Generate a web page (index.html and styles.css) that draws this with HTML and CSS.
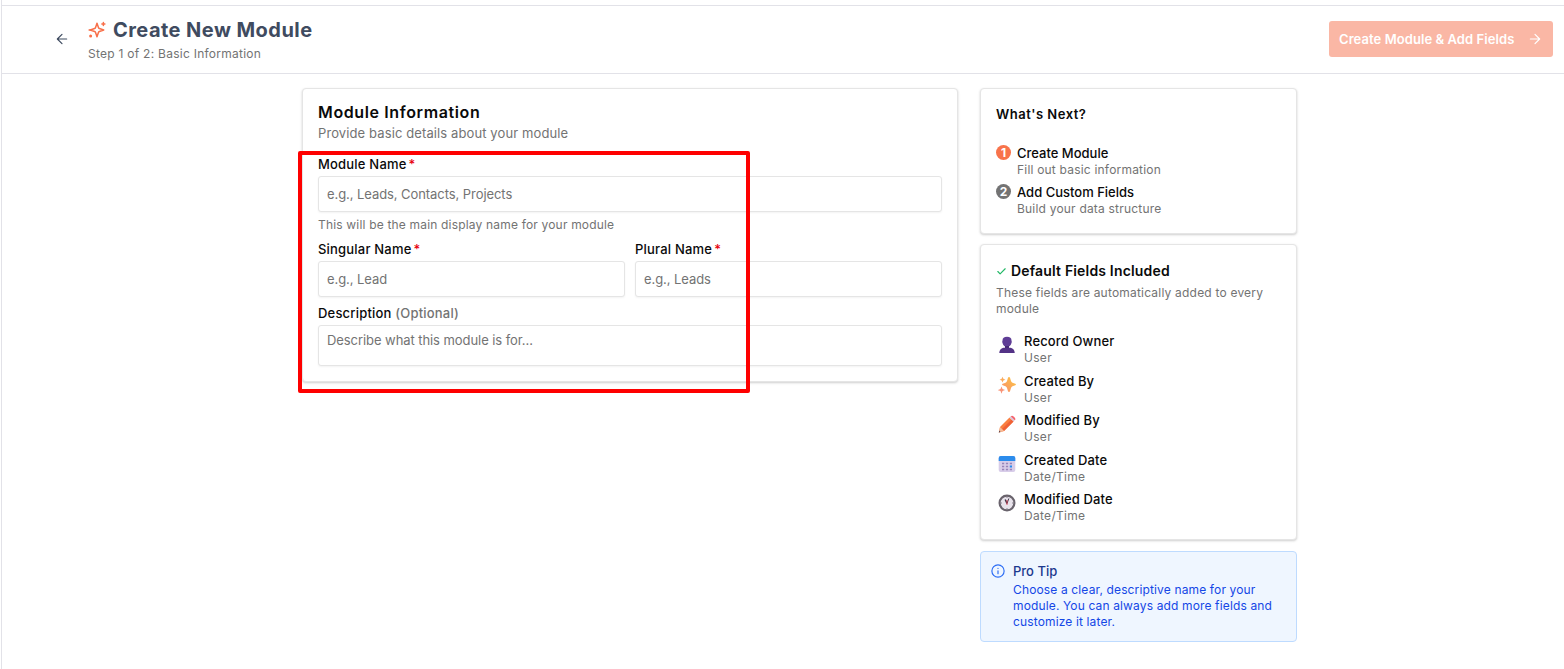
FILE: index.html
```
<!DOCTYPE html>
<html lang="en">
<head>
  <meta charset="utf-8">
  <title>Create New Module</title>
  <link rel="stylesheet" href="styles.css">
</head>
<body>
  <div class="page">
    <header class="header">
      <button class="back" aria-label="Back">
        <svg width="14" height="14" viewBox="0 0 24 24" fill="none" stroke="currentColor" stroke-width="2" stroke-linecap="round" stroke-linejoin="round"><path d="M20 12H4M12 4l-8 8 8 8"/></svg>
      </button>
      <div class="heading">
        <h1>
          <svg width="18" height="18" viewBox="0 0 24 24" fill="none" stroke="#f8704a" stroke-width="2" stroke-linecap="round" stroke-linejoin="round"><path d="M12 3l-1.900 5.800a2 2 0 0 1-1.300 1.300L3 12l5.800 1.900a2 2 0 0 1 1.300 1.300L12 21l1.900-5.800a2 2 0 0 1 1.300-1.300L21 12l-5.800-1.900a2 2 0 0 1-1.300-1.300z"/><path d="M20.500 2v4M22.500 4h-4"/><path d="M1.500 12h2"/><circle cx="3.500" cy="20" r="1"/></svg>
          <span>Create New Module</span>
        </h1>
        <p>Step 1 of 2: Basic Information</p>
      </div>
      <button class="submit" disabled>
        <span>Create Module &amp; Add Fields</span>
        <svg width="14" height="14" viewBox="0 0 24 24" fill="none" stroke="currentColor" stroke-width="2" stroke-linecap="round" stroke-linejoin="round"><path d="M4 12h16M12 4l8 8-8 8"/></svg>
      </button>
    </header>

    <main class="content">
      <form class="card form-card">
        <h2>Module Information</h2>
        <p class="subtitle">Provide basic details about your module</p>
        <label for="name">Module Name<i>*</i></label>
        <input id="name" type="text" placeholder="e.g., Leads, Contacts, Projects">
        <p class="help">This will be the main display name for your module</p>
        <div class="row">
          <div class="col">
            <label for="singular">Singular Name<i>*</i></label>
            <input id="singular" type="text" placeholder="e.g., Lead">
          </div>
          <div class="col">
            <label for="plural">Plural Name<i>*</i></label>
            <input id="plural" type="text" placeholder="e.g., Leads">
          </div>
        </div>
        <label for="description">Description <span class="optional">(Optional)</span></label>
        <textarea id="description" placeholder="Describe what this module is for..."></textarea>
      </form>

      <aside class="sidebar">
        <section class="card next-card">
          <h3>What's Next?</h3>
          <div class="step">
            <span class="badge active">1</span>
            <div>
              <h4>Create Module</h4>
              <p>Fill out basic information</p>
            </div>
          </div>
          <div class="step">
            <span class="badge">2</span>
            <div>
              <h4>Add Custom Fields</h4>
              <p>Build your data structure</p>
            </div>
          </div>
        </section>

        <section class="card fields-card">
          <h3>
            <svg width="11" height="11" viewBox="0 0 24 24" fill="none" stroke="#22b866" stroke-width="2.500" stroke-linecap="round" stroke-linejoin="round"><path d="M20 6L9 17l-5-5"/></svg>
            <span>Default Fields Included</span>
          </h3>
          <p class="fields-desc">These fields are automatically added to every module</p>
          <div class="field">
            <svg width="18" height="18" viewBox="0 0 18 18"><path d="M4.500 4.500C4.500 2 6 .8 9 .8s4.500 1.200 4.500 3.700l.3 1.500-.5 1.400C12.700 9.500 11 11 9 11S5.300 9.500 4.700 7.400L4.200 6z" fill="#5f3d96"/><path d="M7 10h4v3H7z" fill="#462a75"/><path d="M1.300 17c0-3.500 2.500-5.200 5.500-5.200h4.400c3 0 5.500 1.700 5.500 5.200z" fill="#533286"/></svg>
            <div>
              <h4>Record Owner</h4>
              <p>User</p>
            </div>
          </div>
          <div class="field">
            <svg width="18" height="18" viewBox="0 0 18 18">
              <defs><linearGradient id="gold" x1="1" y1="0" x2="0" y2="1"><stop offset="0" stop-color="#fcc73f"/><stop offset="1" stop-color="#f98d70"/></linearGradient></defs>
              <path d="M11 1q.8 0 1 .8l1 3.200q.3 1.200 1.500 1.700l2.800 1.100q1.300.7 0 1.400l-2.800 1.100q-1.200.5-1.500 1.700l-1 3.200q-.2.800-1 .8t-1-.8l-1-3.200Q8.700 10.800 7.500 10.300L4.700 9.200q-1.300-.7 0-1.400l2.800-1.100Q8.700 6.200 9 5l1-3.200q.2-.8 1-.8z" fill="url(#gold)"/>
              <path d="M4.500.8l.9 2 2 .9-2 .9-.9 2-.9-2-2-.9 2-.9z" fill="#fbac5e"/>
              <path d="M3.500 10.500l1 2.600 2.600 1-2.600 1-1 2.600-1-2.600-2.600-1 2.600-1z" fill="#f99477"/>
            </svg>
            <div>
              <h4>Created By</h4>
              <p>User</p>
            </div>
          </div>
          <div class="field">
            <svg width="18" height="18" viewBox="0 0 18 18"><path d="M2 12L11.500 2.500l4 4L6 16l-5.200 1.500z" fill="#fa7f40"/><path d="M4 14L13.500 4.500l2 2L6 16z" fill="#ef6136"/><path d="M11.500 2.500l1.200-1.200 4 4-1.200 1.200z" fill="#d7c7dc"/><path d="M12.700 1.300c1-1 2-.8 2.900.1l1 1c.9.900 1.100 1.900.1 2.900z" fill="#f5626b"/><path d="M2 12l4 4-5.200 1.500z" fill="#f6bb98"/><path d="M1.300 15.500l1.300 1.400-1.800.6z" fill="#51404e"/></svg>
            <div>
              <h4>Modified By</h4>
              <p>User</p>
            </div>
          </div>
          <div class="field">
            <svg width="18" height="18" viewBox="0 0 18 18"><rect x=".7" y="1" width="16.600" height="16" rx="2" fill="#d8cde9"/><path d="M.7 6V3a2 2 0 0 1 2-2h12.600a2 2 0 0 1 2 2v3z" fill="#2b8cec"/><path d="M4 8.500h2.200M7.900 8.500h2.200M4 11.500h2.200M7.900 11.500h2.200M4 14.500h2.200M7.900 14.500h2.200M11.800 8.500h2.200M11.800 14.500h2.200" stroke="#9784b9" stroke-width="1.700"/><path d="M11.800 11.500h2.200" stroke="#258af0" stroke-width="2"/></svg>
            <div>
              <h4>Created Date</h4>
              <p>Date/Time</p>
            </div>
          </div>
          <div class="field">
            <svg width="18" height="18" viewBox="0 0 18 18"><circle cx="9" cy="9" r="7.400" fill="#e8e3eb" stroke="#69636c" stroke-width="2.200"/><path d="M9 3v1M9 14v1M3 9h1M14 9h1" stroke="#8a828f"/><path d="M9 9.500L7.200 5.500" stroke="#40384a" stroke-width="1.500"/><path d="M9 9.500l1.800-5" stroke="#40384a"/><path d="M9 11V6" stroke="#e8364d" stroke-width=".8"/></svg>
            <div>
              <h4>Modified Date</h4>
              <p>Date/Time</p>
            </div>
          </div>
        </section>

        <section class="tip">
          <svg width="14" height="14" viewBox="0 0 24 24" fill="none" stroke="#2b6cf5" stroke-width="2" stroke-linecap="round"><circle cx="12" cy="12" r="10.500"/><path d="M12 16.500V11.500M12 7.500v.1"/></svg>
          <div>
            <h4>Pro Tip</h4>
            <p>Choose a clear, descriptive name for your<br>module. You can always add more fields and<br>customize it later.</p>
          </div>
        </section>
      </aside>
    </main>
  </div>
  <div class="highlight"></div>
</body>
</html>
```
FILE: styles.css
```
* {
  box-sizing: border-box;
}

body {
  margin: 0;
  height: 669px;
  overflow: hidden;
  background: #fff;
  color: #0a0a0a;
  font-family: Inter, "Open Sans", sans-serif;
  font-size: 13px;
}

h1, h2, h3, h4, p {
  margin: 0;
}

svg {
  flex: none;
  display: block;
}

.page {
  margin-left: 1px;
  padding-top: 5px;
  height: 669px;
  border-left: 1px solid #e2e2e8;
}

.header {
  display: flex;
  align-items: center;
  height: 69px;
  padding: 0 11px 1px 53px;
  border-top: 1px solid #e2e2e8;
  border-bottom: 1px solid #e2e2e8;
}

.back {
  padding: 0;
  border: none;
  background: none;
  color: #3d4a5f;
}

.heading {
  flex: 1;
  margin-left: 19px;
}

.heading h1 {
  display: flex;
  align-items: center;
  gap: 7px;
  font-size: 20px;
  line-height: 26px;
  font-weight: 700;
  color: #3f4b60;
  letter-spacing: 0.45px;
}

.heading p {
  margin-top: 3px;
  font-size: 12px;
  line-height: 16px;
  color: #737373;
  letter-spacing: 0.26px;
}

.submit {
  display: flex;
  align-items: center;
  justify-content: space-between;
  width: 224px;
  height: 36px;
  padding: 0 11px 0 10px;
  border: none;
  border-radius: 3px;
  background: #fab7a5;
  color: #fff;
  font-family: inherit;
  font-size: 13px;
  font-weight: 600;
  letter-spacing: 0.07px;
}

.content {
  display: flex;
  align-items: flex-start;
  gap: 22px;
  padding: 14px 0 0 300px;
}

.card {
  border: 1px solid #e5e5e5;
  border-radius: 4px;
  background: #fff;
  box-shadow: 0 1px 3px rgba(0, 0, 0, 0.1), 0 1px 2px rgba(0, 0, 0, 0.1);
}

.form-card {
  display: flex;
  flex-direction: column;
  width: 656px;
  height: 294px;
  padding: 13px 15px 0;
}

.form-card h2 {
  font-size: 16px;
  line-height: 20px;
  font-weight: 600;
  letter-spacing: 0.62px;
}

.subtitle {
  margin: 2px 0 13px;
  line-height: 18px;
  color: #737373;
  letter-spacing: 0.11px;
}

label {
  height: 21px;
  line-height: 18px;
  font-weight: 500;
  letter-spacing: 0.2px;
}

label i {
  margin-left: 2px;
  font-style: normal;
  color: #e7000b;
}

.optional {
  color: #737373;
}

input,
textarea {
  width: 100%;
  height: 36px;
  padding: 0 8px;
  border: 1px solid #e5e5e5;
  border-radius: 3px;
  background: #fff;
  box-shadow: 0 1px 2px rgba(0, 0, 0, 0.05);
  font-family: inherit;
  font-size: 13px;
  letter-spacing: -0.07px;
}

textarea {
  height: 41px;
  padding: 5px 8px;
  line-height: 18px;
  resize: none;
  overflow: hidden;
}

input::placeholder,
textarea::placeholder {
  color: #737373;
}

.help {
  margin: 5px 0 7px;
  font-size: 12px;
  line-height: 16px;
  color: #737373;
  letter-spacing: 0.18px;
}

.row {
  display: flex;
  gap: 10px;
  margin-bottom: 7px;
}

.col {
  display: flex;
  flex: 1;
  flex-direction: column;
}

.sidebar {
  display: flex;
  flex-direction: column;
  width: 317px;
}

.sidebar h3 {
  font-size: 14px;
  line-height: 18px;
  font-weight: 600;
  letter-spacing: 0.17px;
}

.sidebar h4 {
  font-size: 13px;
  line-height: 17px;
  font-weight: 500;
}

.sidebar p {
  font-size: 12px;
  line-height: 16px;
  color: #737373;
  letter-spacing: 0.2px;
}

.sidebar .next-card h3 {
  margin-bottom: 22px;
  font-size: 13px;
  letter-spacing: 0.5px;
}

.next-card {
  height: 146px;
  padding: 16px 15px 0;
}

.step {
  display: flex;
  gap: 6px;
  height: 39px;
}

.badge {
  width: 15px;
  height: 15px;
  border-radius: 50%;
  background: #737373;
  color: #fff;
  font-size: 12px;
  line-height: 15px;
  font-weight: 700;
  text-align: center;
}

.badge.active {
  background: #f8734b;
}

.fields-card {
  height: 296px;
  margin-top: 10px;
  padding: 17px 15px 0;
}

.fields-card h3 {
  display: flex;
  align-items: center;
  gap: 4px;
}

.fields-card .fields-desc {
  margin: 5px 0 16px;
}

.field {
  display: flex;
  gap: 8px;
  height: 39.5px;
  padding-left: 2px;
}

.field svg {
  margin-top: 3px;
}

.field h4 {
  letter-spacing: 0.13px;
}

.sidebar .field p {
  letter-spacing: 0.3px;
}

.tip {
  display: flex;
  gap: 8px;
  height: 91px;
  margin-top: 11px;
  padding: 11px 10px 0;
  border: 1px solid #bedbff;
  border-radius: 4px;
  background: #eff6ff;
}

.tip svg {
  margin-top: 1px;
}

.tip h4 {
  margin-bottom: 2px;
  color: #1c398e;
}

.sidebar .tip p {
  color: #1447e6;
  letter-spacing: 0.14px;
  white-space: nowrap;
}

/* red outline drawn over the form */
.highlight {
  position: absolute;
  left: 298px;
  top: 151px;
  width: 452px;
  height: 242px;
  border: 4px solid #fe0000;
  border-radius: 2px;
  pointer-events: none;
}
```
